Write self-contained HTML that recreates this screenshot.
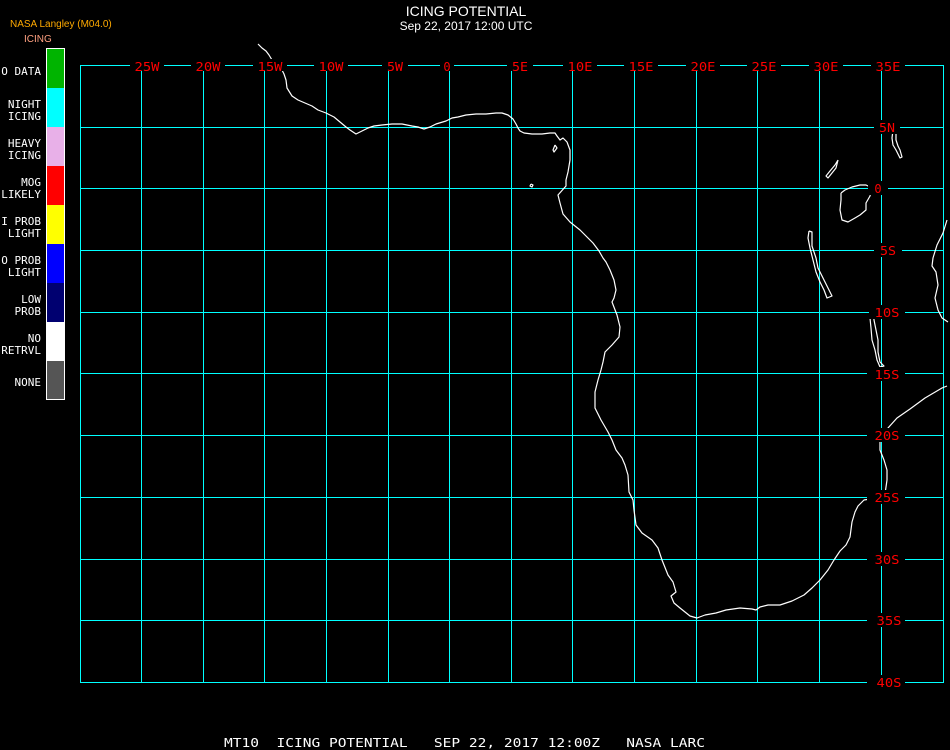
<!DOCTYPE html>
<html><head><meta charset="utf-8"><style>
html,body{margin:0;padding:0;background:#000;width:950px;height:750px;overflow:hidden}
svg{display:block}
text{font-family:"DejaVu Sans Mono","Liberation Mono",monospace}
</style></head><body>
<svg width="950" height="750" viewBox="0 0 950 750" xmlns="http://www.w3.org/2000/svg">
<rect width="950" height="750" fill="#000"/>
<text x="466" y="16" fill="#fff" font-size="14" text-anchor="middle" style="font-family:'Liberation Sans',sans-serif">ICING POTENTIAL</text>
<text x="466" y="30" fill="#fff" font-size="12" text-anchor="middle" style="font-family:'Liberation Sans',sans-serif">Sep 22, 2017 12:00 UTC</text>
<text x="10" y="27" fill="#ffaa00" font-size="10" style="font-family:'Liberation Sans',sans-serif">NASA Langley (M04.0)</text>
<text x="24" y="42" fill="#ffa080" font-size="10" style="font-family:'Liberation Sans',sans-serif">ICING</text>
<g stroke="none">
<rect x="46" y="48" width="19" height="352" fill="#fff"/>
<rect x="47" y="49" width="17" height="39" fill="#00b400"/>
<rect x="47" y="88" width="17" height="39" fill="#00ffff"/>
<rect x="47" y="127" width="17" height="39" fill="#e8b0e8"/>
<rect x="47" y="166" width="17" height="39" fill="#ff0000"/>
<rect x="47" y="205" width="17" height="39" fill="#ffff00"/>
<rect x="47" y="244" width="17" height="39" fill="#0000ff"/>
<rect x="47" y="283" width="17" height="39" fill="#000070"/>
<rect x="47" y="322" width="17" height="39" fill="#fff"/>
<rect x="47" y="361" width="17" height="38" fill="#555"/>
</g>
<g fill="#fff" font-size="11" text-anchor="end" style="font-family:'Liberation Sans',sans-serif">
<text x="41" y="75">O DATA</text>
<text x="41" y="108">NIGHT</text><text x="41" y="120">ICING</text>
<text x="41" y="147">HEAVY</text><text x="41" y="159">ICING</text>
<text x="41" y="186">MOG</text><text x="41" y="198">LIKELY</text>
<text x="41" y="225">I PROB</text><text x="41" y="237">LIGHT</text>
<text x="41" y="264">O PROB</text><text x="41" y="276">LIGHT</text>
<text x="41" y="303">LOW</text><text x="41" y="315">PROB</text>
<text x="41" y="342">NO</text><text x="41" y="354">RETRVL</text>
<text x="41" y="386">NONE</text>
</g>
<g stroke="#00ffff" stroke-width="1" fill="none" shape-rendering="crispEdges">
<path d="M80.5 65V683M141.5 65V683M203.5 65V683M264.5 65V683M326.5 65V683M388.5 65V683M449.5 65V683M511.5 65V683M572.5 65V683M634.5 65V683M696.5 65V683M757.5 65V683M819.5 65V683M881.5 65V683M943.5 65V683"/>
<path d="M80 65.5H944M80 127.5H944M80 188.5H944M80 250.5H944M80 312.5H944M80 373.5H944M80 435.5H944M80 497.5H944M80 559.5H944M80 620.5H944M80 682.5H944"/>
</g>
<g fill="none" stroke="#fff" stroke-width="1.2" stroke-linejoin="round">
<polyline points="258,44 262,48 266,51 269,55 272,60 281,68 284,74 286,80 287,88 292,96 298,100 305,103 312,106 318,110 326,113 334,117 340,122 346,127 350,130 356,134 362,131 368,128 374,126 382,125 392,124 402,124 412,126 418,127 424,129 430,127 436,124 446,121 452,118 458,117 466,115 476,114 486,114 496,113 502,113 508,115 513,119 516,124 518,128 520,131 524,133 532,134 542,134 550,133 555,133 557,136 560,140 563,138 567,142 570,150 570,160 568,172 566,180 566,186 558,195 560,203 563,214 570,222 580,230 593,243 599,251 603,258 606,262 610,270 614,280 616,290 614,298 612,302 617,315 620,327 619,337 612,345 605,352 603,362 601,370 598,380 595,392 595,408 601,420 608,432 612,440 616,450 622,458 625,465 628,475 629,492 633,500 634,510 636,525 642,533 652,540 658,548 662,560 668,575 673,582 676,592 671,596 674,603 680,608 690,616 697,618 705,615 716,613 726,610 740,608 752,609 756,610 760,607 768,605 780,605 792,601 804,595 812,588 820,580 828,570 834,560 840,551 846,545 850,537 852,522 855,512 858,506 864,500 870,499 876,498 880,496 885,494"/>
<polyline points="885,494 887,480 887,470 884,460 880,450 880,440 888,428 897,418 910,409 925,398 942,388 947,386"/>
<polyline points="947,220 943,233 937,245 933,258 932,266 936,272 938,285 935,298 938,310 942,318 948,322"/>
<polyline points="809,231 812,232 812,246 816,258 818,268 822,276 826,284 830,292 832,296 827,298 824,290 820,282 816,272 813,260 810,248 808,238 809,231"/>
<polyline points="870,308 873,307 874,320 876,330 878,340 878,352 880,362 884,366 880,367 877,360 875,350 872,340 871,328 870,318 870,308"/>
<polyline points="841,193 845,190 852,187 860,185 866,185 872,188 870,196 866,203 866,210 860,215 855,218 848,222 842,220 840,210 841,200 841,193"/>
<polyline points="838,160 835,165 830,171 826,176 828,178 832,173 836,168 838,160"/>
<polyline points="893,130 896,130 896,140 898,146 900,150 902,157 900,158 896,150 893,145 892,138 893,130"/>
<polyline points="555,145 557,148 554,152 553,150 555,145"/>
<polyline points="531,184 533,185 532,187 530,186 531,184"/>
</g>
<g fill="#ff0000" font-size="12" text-anchor="middle">
<rect x="130" y="59" width="34" height="12" fill="#000"/><text x="147" y="71" textLength="25" lengthAdjust="spacingAndGlyphs">25W</text>
<rect x="191" y="59" width="34" height="12" fill="#000"/><text x="208" y="71" textLength="25" lengthAdjust="spacingAndGlyphs">20W</text>
<rect x="253" y="59" width="34" height="12" fill="#000"/><text x="270" y="71" textLength="25" lengthAdjust="spacingAndGlyphs">15W</text>
<rect x="314" y="59" width="34" height="12" fill="#000"/><text x="331" y="71" textLength="25" lengthAdjust="spacingAndGlyphs">10W</text>
<rect x="382" y="59" width="26" height="12" fill="#000"/><text x="395" y="71" textLength="16" lengthAdjust="spacingAndGlyphs">5W</text>
<rect x="440" y="59" width="14" height="12" fill="#000"/><text x="447" y="71">0</text>
<rect x="507" y="59" width="26" height="12" fill="#000"/><text x="520" y="71" textLength="16" lengthAdjust="spacingAndGlyphs">5E</text>
<rect x="563" y="59" width="34" height="12" fill="#000"/><text x="580" y="71" textLength="25" lengthAdjust="spacingAndGlyphs">10E</text>
<rect x="624" y="59" width="34" height="12" fill="#000"/><text x="641" y="71" textLength="25" lengthAdjust="spacingAndGlyphs">15E</text>
<rect x="686" y="59" width="34" height="12" fill="#000"/><text x="703" y="71" textLength="25" lengthAdjust="spacingAndGlyphs">20E</text>
<rect x="747" y="59" width="34" height="12" fill="#000"/><text x="764" y="71" textLength="25" lengthAdjust="spacingAndGlyphs">25E</text>
<rect x="809" y="59" width="34" height="12" fill="#000"/><text x="826" y="71" textLength="25" lengthAdjust="spacingAndGlyphs">30E</text>
<rect x="871" y="59" width="34" height="12" fill="#000"/><text x="888" y="71" textLength="25" lengthAdjust="spacingAndGlyphs">35E</text>
<rect x="874" y="120" width="26" height="14" fill="#000"/><text x="887" y="132" textLength="16" lengthAdjust="spacingAndGlyphs">5N</text>
<rect x="868" y="181" width="20" height="14" fill="#000"/><text x="878" y="193">0</text>
<rect x="874" y="243" width="28" height="14" fill="#000"/><text x="888" y="255" textLength="16" lengthAdjust="spacingAndGlyphs">5S</text>
<rect x="869" y="305" width="36" height="14" fill="#000"/><text x="887" y="317" textLength="25" lengthAdjust="spacingAndGlyphs">10S</text>
<rect x="867" y="367" width="38" height="14" fill="#000"/><text x="887" y="379" textLength="25" lengthAdjust="spacingAndGlyphs">15S</text>
<rect x="867" y="428" width="38" height="14" fill="#000"/><text x="887" y="440" textLength="25" lengthAdjust="spacingAndGlyphs">20S</text>
<rect x="867" y="490" width="38" height="14" fill="#000"/><text x="887" y="502" textLength="25" lengthAdjust="spacingAndGlyphs">25S</text>
<rect x="867" y="552" width="38" height="14" fill="#000"/><text x="887" y="564" textLength="25" lengthAdjust="spacingAndGlyphs">30S</text>
<rect x="867" y="613" width="38" height="14" fill="#000"/><text x="889" y="625" textLength="25" lengthAdjust="spacingAndGlyphs">35S</text>
<rect x="867" y="675" width="38" height="14" fill="#000"/><text x="889" y="687" textLength="25" lengthAdjust="spacingAndGlyphs">40S</text>
</g>
<text x="224" y="747" fill="#fff" font-size="12" xml:space="preserve" textLength="481" lengthAdjust="spacingAndGlyphs">MT10  ICING POTENTIAL   SEP 22, 2017 12:00Z   NASA LARC</text>
</svg>
</body></html>
